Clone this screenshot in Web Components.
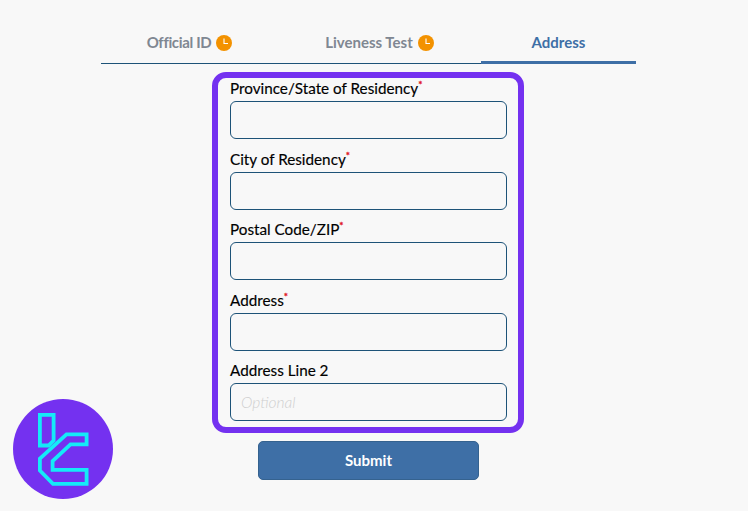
<!DOCTYPE html>
<html>
<head>
<meta charset="utf-8">
<title>Address</title>
<style>
    html, body { margin: 0; height: 100%; }
    body { background: #f8f8f8; font-family: "Lato", "Open Sans", sans-serif; }
</style>
</head>
<body>
<kyc-page>
    <kyc-tabs>
        <kyc-tab pending style="letter-spacing: -0.35px">Official ID</kyc-tab>
        <kyc-tab pending>Liveness Test</kyc-tab>
        <kyc-tab active>Address</kyc-tab>
    </kyc-tabs>
    <kyc-form>
        <kyc-field required>Province/State of Residency</kyc-field>
        <kyc-field required>City of Residency</kyc-field>
        <kyc-field required>Postal Code/ZIP</kyc-field>
        <kyc-field required>Address</kyc-field>
        <kyc-field placeholder="Optional">Address Line 2</kyc-field>
    </kyc-form>
    <kyc-submit>Submit</kyc-submit>
</kyc-page>
<kyc-logo></kyc-logo>

<script>
/**
 * Page column, centres the tabs, form and button.
 */
customElements.define('kyc-page', class KycPage extends HTMLElement {
    constructor() {
        super();
        this.attachShadow({ mode: 'open' });
        this.shadowRoot.innerHTML = `
            <style>
                :host {
                    display: flex;
                    flex-direction: column;
                    align-items: center;
                    padding: 22px 11px 0 0;
                }
            </style>
            <slot></slot>
        `;
    }
});

/**
 * Row of step tabs with the thin line below.
 */
customElements.define('kyc-tabs', class KycTabs extends HTMLElement {
    constructor() {
        super();
        this.attachShadow({ mode: 'open' });
        this.shadowRoot.innerHTML = `
            <style>
                :host {
                    display: grid;
                    grid-template-columns: 177px 203px 155px;
                    width: 535px;
                    height: 42px;
                    box-sizing: border-box;
                    border-bottom: 1px solid #1d5378;
                }
            </style>
            <slot></slot>
        `;
    }
});

/**
 * One step tab, with a clock when the step is pending.
 */
customElements.define('kyc-tab', class KycTab extends HTMLElement {
    constructor() {
        super();
        this.attachShadow({ mode: 'open' });
        const clock = this.hasAttribute('pending') ? `
            <svg width="16" height="16" viewBox="0 0 16 16">
                <circle cx="8" cy="8" r="8" fill="#f39200"/>
                <path d="M8 3.5V8.5H12" fill="none" stroke="#fff" stroke-width="1.1"/>
            </svg>` : '';
        this.shadowRoot.innerHTML = `
            <style>
                :host {
                    display: flex;
                    align-items: center;
                    justify-content: center;
                    gap: 5px;
                    height: 41px;
                    padding-bottom: 2px;
                    box-sizing: border-box;
                    font-size: 15px;
                    font-weight: 700;
                    color: #7f8792;
                }
                :host([active]) {
                    height: 42px;
                    color: #3e6fa6;
                    border-bottom: 3px solid #3e6fa6;
                    padding-bottom: 0;
                }
                svg {
                    margin-top: 2px;
                }
            </style>
            <slot></slot>${clock}
        `;
    }
});

/**
 * Purple framed box around the fields.
 */
customElements.define('kyc-form', class KycForm extends HTMLElement {
    constructor() {
        super();
        this.attachShadow({ mode: 'open' });
        this.shadowRoot.innerHTML = `
            <style>
                :host {
                    display: flex;
                    flex-direction: column;
                    gap: 12.5px;
                    width: 312px;
                    height: 361px;
                    margin: 8px 1px 0 0;
                    padding: 3px 11px 0 12px;
                    box-sizing: border-box;
                    border: 6px solid #7431f0;
                    border-radius: 14px;
                }
            </style>
            <slot></slot>
        `;
    }
});

/**
 * Label with its text input.
 */
customElements.define('kyc-field', class KycField extends HTMLElement {
    constructor() {
        super();
        this.attachShadow({ mode: 'open' });
        const star = this.hasAttribute('required') ? '<sup>*</sup>' : '';
        const placeholder = this.getAttribute('placeholder') || '';
        this.shadowRoot.innerHTML = `
            <style>
                :host {
                    display: block;
                    font-size: 15.25px;
                    color: #000;
                }
                label {
                    display: block;
                    height: 20px;
                    line-height: 14px;
                    -webkit-text-stroke: 0.15px #000;
                }
                sup {
                    color: #e01020;
                    -webkit-text-stroke: 0.3px #e01020;
                    font-size: 10px;
                    line-height: 0;
                }
                input {
                    display: block;
                    width: 100%;
                    height: 38px;
                    box-sizing: border-box;
                    padding: 0 10px;
                    background: transparent;
                    border: 1px solid #1d5378;
                    border-radius: 6px;
                    font: inherit;
                    font-size: 15.5px;
                }
                input::placeholder {
                    color: #cfcfcf;
                    font-style: italic;
                    font-weight: 300;
                }
            </style>
            <label><slot></slot>${star}</label>
            <input type="text" placeholder="${placeholder}">
        `;
    }
});

/**
 * Blue submit button.
 */
customElements.define('kyc-submit', class KycSubmit extends HTMLElement {
    constructor() {
        super();
        this.attachShadow({ mode: 'open' });
        this.shadowRoot.innerHTML = `
            <style>
                :host {
                    display: flex;
                    align-items: center;
                    justify-content: center;
                    width: 221px;
                    height: 39px;
                    margin-top: 8px;
                    padding-bottom: 2px;
                    box-sizing: border-box;
                    background: #3e6fa6;
                    border: 1px solid #35628f;
                    border-radius: 5px;
                    color: #fff;
                    font-size: 15px;
                    font-weight: 700;
                }
            </style>
            <slot></slot>
        `;
    }
});

/**
 * Round logo in the lower left corner.
 */
customElements.define('kyc-logo', class KycLogo extends HTMLElement {
    constructor() {
        super();
        this.attachShadow({ mode: 'open' });
        this.shadowRoot.innerHTML = `
            <style>
                :host {
                    position: absolute;
                    left: 13px;
                    top: 399px;
                    width: 100px;
                    height: 100px;
                }
            </style>
            <svg width="100" height="100" viewBox="13 399 100 100">
                <circle cx="63" cy="449" r="50" fill="#7431f0"/>
                <g fill="none" stroke="#14eaf8" stroke-width="3.8" stroke-linejoin="miter">
                    <path d="M39.9 414.9H53.6V440.5L48.5 445.5H39.9Z"/>
                    <path d="M39.9 458.7L66.5 434.4H86.6V444.4H70.5L52.6 461V469.9H86.6V483.8H53L39.9 470.5Z"/>
                </g>
            </svg>
        `;
    }
});
</script>
</body>
</html>
